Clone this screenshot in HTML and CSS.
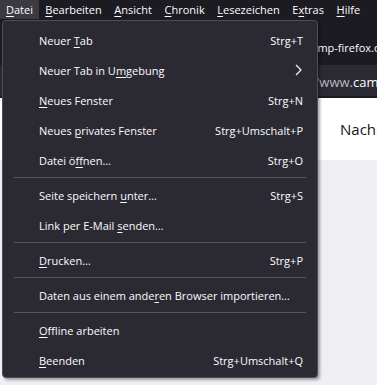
FILE: index.html
```html
<!DOCTYPE html>
<html lang="de">
<head>
<meta charset="utf-8">
<title>Datei-Menü</title>
<link rel="stylesheet" href="styles.css">
</head>
<body>
<div class="menubar">
  <span class="mb-item active"><u>D</u>atei</span>
  <span class="mb-item"><u>B</u>earbeiten</span>
  <span class="mb-item"><u>A</u>nsicht</span>
  <span class="mb-item"><u>C</u>hronik</span>
  <span class="mb-item"><u>L</u>esezeichen</span>
  <span class="mb-item">E<u>x</u>tras</span>
  <span class="mb-item"><u>H</u>ilfe</span>
</div>
<div class="browser">
  <div class="tabstrip"><span class="tabtitle">camp-firefox.de</span></div>
  <div class="navbar"><span class="url"><span class="dim">https://www.</span>camp-firefox.de</span></div>
  <div class="page-top"><span class="heading">Nachrichten</span></div>
  <div class="page-rest"></div>
</div>
<div class="menu">
  <div class="item"><span>Neuer <u>T</u>ab</span><span>Strg+T</span></div>
  <div class="item"><span>Neuer Tab in U<u>m</u>gebung</span><svg class="chev" width="7" height="12" viewBox="0 0 7 12"><polyline points="1,1 6,6 1,11" fill="none" stroke="#fbfbfe" stroke-width="1.2"/></svg></div>
  <div class="item"><span><u>N</u>eues Fenster</span><span>Strg+N</span></div>
  <div class="item"><span>Neues <u>p</u>rivates Fenster</span><span>Strg+Umschalt+P</span></div>
  <div class="item"><span>Datei ö<u>f</u>fnen…</span><span>Strg+O</span></div>
  <div class="sep"></div>
  <div class="item"><span>Seite speichern <u>u</u>nter…</span><span>Strg+S</span></div>
  <div class="item"><span>Link per E-Mail <u>s</u>enden…</span></div>
  <div class="sep"></div>
  <div class="item"><span><u>D</u>rucken…</span><span>Strg+P</span></div>
  <div class="sep"></div>
  <div class="item"><span>Daten aus einem ande<u>r</u>en Browser importieren…</span></div>
  <div class="sep"></div>
  <div class="item"><span><u>O</u>ffline arbeiten</span></div>
  <div class="item"><span><u>B</u>eenden</span><span>Strg+Umschalt+Q</span></div>
</div>
</body>
</html>
```
FILE: styles.css
```css
html, body {
  margin: 0;
  padding: 0;
}
body {
  width: 377px;
  height: 385px;
  overflow: hidden;
  position: relative;
  background: #f0f0f4;
  font-family: "Open Sans", "Noto Sans", sans-serif;
  font-size: 11px;
  color: #fbfbfe;
}
u {
  text-decoration-thickness: 1px;
  text-underline-offset: 2px;
}
.menubar {
  height: 20px;
  background: #1c1b22;
  display: flex;
  align-items: stretch;
}
.mb-item {
  padding: 0 6.3px;
  line-height: 19px;
  height: 19px;
  white-space: nowrap;
}
.mb-item:first-child {
  padding: 0 6px;
}
.mb-item.active {
  background: #3b3a42;
}
.browser {
  display: flex;
  flex-direction: column;
}
.tabstrip {
  height: 45px;
  background: #1c1b22;
  padding-left: 306px;
  box-sizing: border-box;
  padding-top: 20px;
  white-space: nowrap;
  overflow: hidden;
}
.tabtitle {
  font-size: 11px;
  color: #fbfbfe;
}
.navbar {
  height: 33px;
  background: #2b2a33;
  border-bottom: 2px solid #1c1b22;
  box-sizing: border-box;
  padding-left: 275px;
  padding-top: 8px;
  white-space: nowrap;
  overflow: hidden;
  font-size: 13px;
}
.url .dim {
  color: #b8b7c0;
}
.page-top {
  height: 62px;
  background: #ffffff;
  box-sizing: border-box;
  padding-left: 340px;
  padding-top: 21px;
  white-space: nowrap;
  overflow: hidden;
}
.heading {
  color: #15141a;
  font-size: 15px;
}
.page-rest {
  flex: 1;
}
.menu {
  position: absolute;
  left: 2px;
  top: 20px;
  width: 314px;
  padding: 4px 0 2px;
  background: #2b2a33;
  border: 1px solid #4e4d56;
  border-radius: 4px;
  box-shadow: 2px 2px 3px rgba(0, 0, 0, 0.35);
}
.item {
  height: 30px;
  display: flex;
  align-items: center;
  justify-content: space-between;
  padding: 0 14px 0 36px;
  white-space: nowrap;
}
.chev {
  margin-right: 1px;
}
.sep {
  height: 1px;
  margin: 2px 11px;
  background: #55545d;
}
```
